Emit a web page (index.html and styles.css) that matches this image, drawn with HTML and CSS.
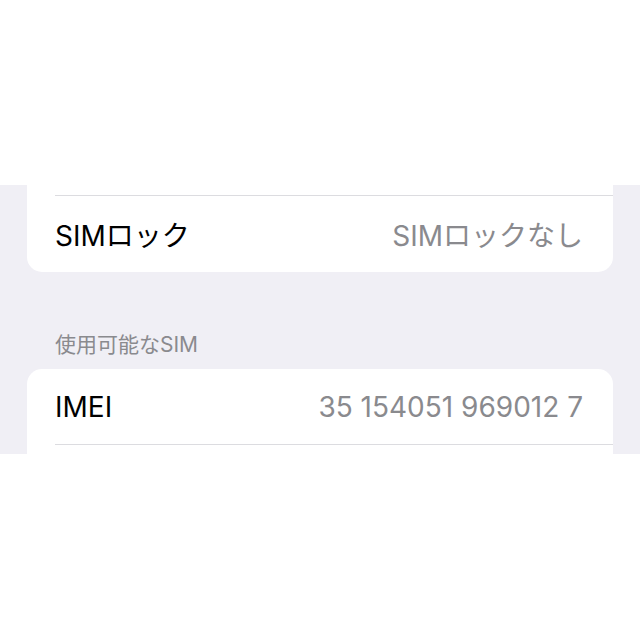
FILE: index.html
```html
<!DOCTYPE html>
<html lang="ja">
<head>
    <meta charset="UTF-8">
    <meta name="viewport" content="width=device-width, initial-scale=1.0">
    <title>SIM</title>
    <link rel="stylesheet" href="styles.css">
</head>
<body>
    <div class="blank-top"></div>

    <div class="panel">
        <!-- card cut off at the top of the screenshot -->
        <div class="card card-bottom">
            <div class="row row-stub"></div>
            <div class="row">
                <span class="label">SIMロック</span>
                <span class="value">SIMロックなし</span>
            </div>
        </div>

        <div class="section-title">使用可能なSIM</div>

        <div class="card card-top">
            <div class="row">
                <span class="label">IMEI</span>
                <span class="value">35 154051 969012 7</span>
            </div>
            <div class="row"></div>
        </div>
    </div>
</body>
</html>
```

FILE: styles.css
```css
body {
    margin: 0;
    background-color: #ffffff;
    font-family: 'Inter', 'Noto Sans CJK JP', sans-serif;
    color: #000;
}

.blank-top {
    height: 185px;
}

.panel {
    background-color: #f0eff5;
    height: 269px;
    overflow: hidden;
    padding: 0 27px;
}

.card {
    background-color: #ffffff;
}

.card-bottom {
    border-radius: 0 0 15px 15px;
}

.card-top {
    border-radius: 15px 15px 0 0;
}

.row {
    margin-left: 28px;
    padding-right: 30px;
    height: 76px;
    display: flex;
    justify-content: space-between;
    align-items: center;
    border-bottom: 1px solid #dcdce0;
    font-size: 28px;
}

.row:last-child {
    border-bottom: none;
}

.row-stub {
    height: 10px;
}

.card-top .row {
    height: 75px;
}

.label {
    color: #000;
}

.value {
    color: #8a8a8e;
}

.section-title {
    padding: 60px 28px 12px;
    font-size: 21px;
    line-height: 25px;
    color: #8a8a8e;
}
```
